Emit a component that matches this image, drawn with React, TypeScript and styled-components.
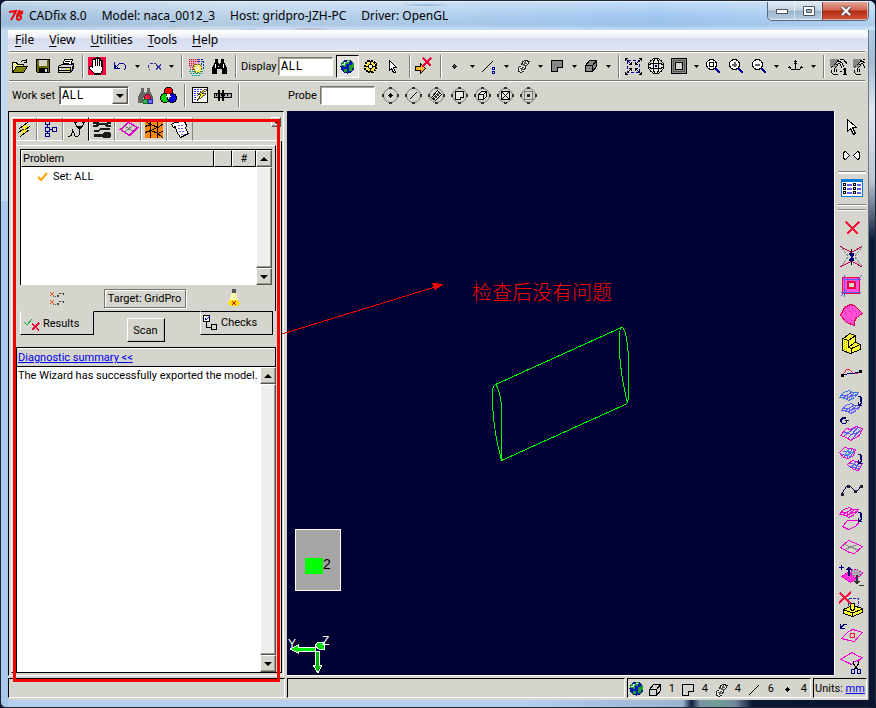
import React from "react";
import styled, { createGlobalStyle } from "styled-components";

const UI = `Roboto, "Noto Sans", sans-serif`;
const MENU = `"Noto Sans", "Open Sans", sans-serif`;
const FACE = "#d6d5cd";

const Global = createGlobalStyle`
  *, *::before, *::after { box-sizing: border-box; }
  body { margin: 0; background: #0a1230; font-family: ${UI}; font-size: 11px; color: #000; }
  button, input, select { font: inherit; color: inherit; margin: 0; padding: 0; border-radius: 0; }
`;

/* ---------- window frame ---------- */

const Frame = styled.div`
  min-height: 100vh;
  display: flex;
  flex-direction: column;
  padding: 0 6px 7px 7px;
  border: 1px solid #1c2733;
  border-radius: 7px 7px 6px 6px;
  background:
    linear-gradient(#a8c8ea 0 0) left 200px / 7px 100% no-repeat,
    linear-gradient(#c4d9f0 0 0) left top / 7px 200px no-repeat,
    linear-gradient(#bfdcf8 0, #a3bcd4 60px, #e0e6ee 110px, #b9c5d2 180px, #0b1838 240px, #0b1530 100%) right 0 / 6px 100% no-repeat,
    linear-gradient(90deg, #b4d0f1 0, #b4d0f1 60%, #9ab4d0 78%, #10203f 79%, #7c92a8 80%, #6f9f94 82%, #71879f 84%, #0b1733 86%, #0b1530 100%);
  overflow: hidden;
`;

const TitleBar = styled.header`
  height: 29px;
  margin: 0 -6px 0 -7px;
  padding: 0 6px 0 8px;
  display: flex;
  align-items: center;
  gap: 5px;
  border-top: 1px solid #e8f2fc;
  background:
    radial-gradient(ellipse at 175px 25px, #c98f9e88, transparent 18px),
    radial-gradient(ellipse at 248px 27px, #5570c088, transparent 16px),
    radial-gradient(ellipse at 310px 27px, #a8708c88, transparent 24px),
    radial-gradient(ellipse at 425px 3px, #34608c66, transparent 26px),
    linear-gradient(#ffffff55, transparent 45%, #5a88b822 80%, #ffffff55),
    linear-gradient(90deg, #a4c2df, #bed3e8 25%, #b4d1ef 50%, #a3c9f2 75%, #b9d6f2);
`;

const Title = styled.h1`
  flex: 1;
  display: flex;
  gap: 15px;
  margin: 0;
  font-family: ${MENU};
  font-size: 12px;
  font-weight: 400;
  line-height: 16px;
  white-space: nowrap;
`;

const WindowButtons = styled.div`
  align-self: flex-start;
  display: flex;
  border: 1px solid #55697f;
  border-top: 0;
  border-radius: 0 0 5px 5px;
  overflow: hidden;
`;

const WindowButton = styled.button<{ $close?: boolean }>`
  width: ${(p) => (p.$close ? 46 : 27)}px;
  height: 18px;
  display: grid;
  place-items: center;
  border: 0;
  border-left: ${(p) => (p.$close ? "1px solid #6a3a3a" : "0")};
  box-shadow: inset -1px -1px 0 #ffffff88;
  background: ${(p) =>
    p.$close
      ? "linear-gradient(#e5a698, #d0644f 45%, #b52a12 50%, #d2553a)"
      : "linear-gradient(#dfe9f4, #c3d3e4 45%, #9db4cc 50%, #b9cee2)"};
`;

const Client = styled.div`
  flex: 1;
  display: flex;
  flex-direction: column;
  min-width: 0;
  background: ${FACE};
  border-right: 1px solid #6c7884;
`;

const MenuBar = styled.nav`
  height: 21px;
  display: flex;
  align-items: center;
  gap: 15px;
  padding-left: 7px;
  font-family: ${MENU};
  font-size: 12px;
  line-height: 16px;
  background: linear-gradient(#fff, #eef0f8 35%, #d7ddef 45%, #dfe4f3);
  border-bottom: 1px solid #f4f4f4;
`;

const MenuItem = styled.button`
  border: 0;
  background: none;
  u { text-underline-offset: 2px; }
`;

/* ---------- toolbars ---------- */

const Toolbar = styled.div`
  height: 29px;
  margin: 0 3px 0 1px;
  display: flex;
  align-items: center;
  overflow: hidden;
  border-top: 1px solid #7d7d78;
  box-shadow: inset 0 1px 0 #fff;
  & > * { flex: none; }
`;

const Tool = styled.button<{ $active?: boolean; $wide?: boolean }>`
  width: ${(p) => (p.$wide ? 26 : 23)}px;
  height: 23px;
  display: grid;
  place-items: center;
  border: 1px solid;
  border-color: ${(p) => (p.$active ? "#000 #fff #fff #000" : "transparent")};
  background: ${(p) => (p.$active ? "#e6e5df" : "none")};
`;

const CaretButton = styled.button`
  width: 11px;
  height: 21px;
  display: grid;
  place-items: center;
  border: 0;
  background: none;
`;

const Separator = styled.span`
  width: 2px;
  height: 23px;
  margin: 0 2px 0 4px;
  background: linear-gradient(90deg, #7d7d78 50%, #fff 50%);
`;

const ToolLabel = styled.label<{ $width: number }>`
  width: ${(p) => p.$width}px;
  padding: 1px 0 0 2px;
  line-height: 16px;
  white-space: nowrap;
`;

const TextBox = styled.input`
  width: 55px;
  height: 19px;
  padding: 2px 2px 0;
  margin-right: 3px;
  font: 12px "Liberation Mono", monospace;
  border: 1px solid;
  border-color: #77756e #fff #fff #77756e;
  box-shadow: inset 1px 1px 0 #aaa89f;
  background: #fff;
`;

const Combo = styled.div`
  position: relative;
  width: 70px;
  margin-right: 5px;
  height: 19px;
  select {
    width: 100%;
    height: 100%;
    padding: 2px 2px 0;
    appearance: none;
    font: 12px "Liberation Mono", monospace;
    border: 1px solid;
    border-color: #77756e #fff #fff #77756e;
    box-shadow: inset 1px 1px 0 #555;
    background: #fff;
  }
`;

const raised = `
  border: 1px solid;
  border-color: #fff #55534e #55534e #fff;
  box-shadow: inset -1px -1px 0 #9b9990;
  background: ${FACE};
`;

const ComboArrow = styled.span`
  position: absolute;
  top: 2px;
  right: 1px;
  bottom: 1px;
  width: 16px;
  display: grid;
  place-items: center;
  pointer-events: none;
  ${raised}
`;

const Filler = styled.span<{ $w: number }>`
  width: ${(p) => p.$w}px;
`;

/* ---------- main area ---------- */

const Main = styled.main`
  position: relative;
  flex: 1;
  display: flex;
  min-height: 0;
  margin-top: 2px;
`;

const SidePanel = styled.section`
  position: relative;
  flex: none;
  width: 276px;
  display: flex;
  flex-direction: column;
  margin-bottom: 1px;
  padding: 5px 1px 2px 2px;
  border: 1px solid;
  border-color: #000 #fff #fff #000;
`;

const TabStrip = styled.div`
  display: flex;
  height: 24px;
  padding-right: 1px;
`;

const IconTab = styled.button<{ $active?: boolean }>`
  width: 26px;
  height: 24px;
  padding: 1px 0 0;
  display: grid;
  place-items: center;
  border: 0;
  border-top: 1px solid #fff;
  border-left: 1px solid #fff;
  border-right: 1px solid ${(p) => (p.$active ? "#000" : "#88867e")};
  border-bottom: 1px solid ${(p) => (p.$active ? FACE : "#fff")};
  background: none;
`;

const TabRest = styled.span`
  flex: 1;
  display: flex;
  justify-content: flex-end;
  align-items: flex-start;
  border-bottom: 1px solid #fff;
`;

const CollapseButton = styled.button`
  width: 10px;
  height: 10px;
  display: grid;
  place-items: center;
  ${raised}
`;

const TabPage = styled.div`
  flex: 1;
  display: flex;
  flex-direction: column;
  padding: 4px 5px 0 4px;
  border-left: 1px solid #fff;
  border-right: 1px solid #000;
  border-bottom: 1px solid #000;
`;

const ResultsPage = styled.div`
  display: flex;
  flex-direction: column;
  padding: 3px 3px 0 4px;
  border-top: 1px solid #fff;
  border-right: 1px solid #000;
`;

const ListFrame = styled.div`
  display: grid;
  grid-template-columns: minmax(0, 1fr) 16px;
  height: 136px;
  border-top: 1px solid #000;
  border-left: 1px solid #000;
  background: #fff;
`;

const ProblemTable = styled.table`
  width: 100%;
  align-self: start;
  table-layout: fixed;
  border-collapse: separate;
  border-spacing: 0;
  th {
    height: 17px;
    padding: 1px 1px 0;
    line-height: 14px;
    font-weight: 400;
    text-align: left;
    background: ${FACE};
    border: 1px solid;
    border-color: #fff #000 #000 #fff;
  }
  th:nth-child(2) { width: 18px; }
  th:nth-child(3) { width: 24px; text-align: center; }
  td { height: 18px; padding: 1px 0 0; line-height: 16px; }
`;

const SetCell = styled.span`
  display: flex;
  align-items: center;
  gap: 5px;
  padding-left: 16px;
`;

const ScrollBar = styled.div`
  display: flex;
  flex-direction: column;
  background: #e9e8e3;
`;

const ScrollButton = styled.button`
  height: 17px;
  flex: none;
  display: grid;
  place-items: center;
  ${raised}
`;

const Thumb = styled.div`
  flex: 1;
  ${raised}
  background: #eeeeec;
`;

const TargetRow = styled.div`
  display: flex;
  align-items: center;
  justify-content: space-between;
  height: 26px;
  padding: 0 32px 0 28px;
`;

const TargetButton = styled.button`
  height: 19px;
  width: 82px;
  margin-right: 4px;
  padding-top: 1px;
  line-height: 15px;
  border: 1px solid #77756e;
  box-shadow: inset 1px 1px 0 #fff, 1px 1px 0 #fff;
  background: ${FACE};
`;

const LowerTabs = styled.div`
  display: flex;
  justify-content: space-between;
  align-items: flex-start;
  height: 36px;
  padding: 0 3px 0 4px;
`;

const LowerTab = styled.button<{ $active?: boolean }>`
  display: flex;
  align-items: center;
  gap: 3px;
  width: ${(p) => (p.$active ? 74 : 73)}px;
  height: 24px;
  padding: ${(p) => (p.$active ? 4 : 2)}px 2px 2px;
  line-height: 16px;
  border: 1px solid;
  border-color: ${(p) => (p.$active ? FACE : "#000")} #000 #000 #fff;
  background: ${FACE};
`;

const ScanSlot = styled.span`
  flex: 1;
  display: flex;
  justify-content: center;
  padding: 6px 3px 0 0;
  border-top: 1px solid #000;
`;

const ScanButton = styled.button`
  width: 38px;
  height: 24px;
  border: 1px solid;
  border-color: #fff #000 #000 #fff;
  box-shadow: inset -1px -1px 0 #c0beb6;
  background: ${FACE};
`;

const Summary = styled.section`
  flex: 1;
  display: flex;
  flex-direction: column;
  border-left: 1px solid #000;
`;

const SummaryHead = styled.h2`
  margin: 0;
  height: 20px;
  padding: 2px 1px 0;
  font-size: 11px;
  font-weight: 400;
  line-height: 16px;
  border: 1px solid #000;
  border-left: 0;
  box-shadow: inset 0 1px 0 #fff;
  a { color: #0000f0; }
`;

const SummaryBody = styled.div`
  flex: 1;
  display: grid;
  grid-template-columns: minmax(0, 1fr) 16px;
  background: #fff;
  p { margin: 0; padding: 1px 0 0 1px; line-height: 16px; white-space: nowrap; }
`;

const Highlight = styled.div`
  position: absolute;
  z-index: 2;
  inset: 7px 3px -7px 4px;
  border: 3px solid #f80000;
  pointer-events: none;
`;

const Viewport = styled.section`
  position: relative;
  flex: 1;
  min-width: 0;
  margin: 0 0 1px 3px;
  background: #000033;
  border-right: 1px solid #fff;
  border-bottom: 1px solid #fff;
`;

const Scene = styled.svg`
  display: block;
  position: absolute;
  left: -8px;
  top: 0;
`;

const Note = styled.p`
  position: absolute;
  left: 185px;
  top: 168px;
  margin: 0;
  font: 300 20px/26px "Noto Sans CJK SC", sans-serif;
  color: #fa0000;
  white-space: nowrap;
`;

const Legend = styled.div`
  position: absolute;
  left: 8px;
  bottom: 84px;
  width: 46px;
  height: 62px;
  display: flex;
  align-items: center;
  padding: 8px 0 0 9px;
  border: 1px solid #fff;
  background: #a6a6a6;
  font: 14px "Liberation Sans", sans-serif;
`;

const Swatch = styled.span`
  width: 18px;
  height: 16px;
  margin-top: 3px;
  background: #00ff00;
`;

const Axes = styled.svg`
  position: absolute;
  left: 0;
  bottom: 0;
  font: 12px "Liberation Sans", sans-serif;
`;

const Rail = styled.aside`
  flex: none;
  width: 33px;
  display: flex;
  flex-direction: column;
  align-items: center;
  padding-top: 1px;
`;

const RailTool = styled.button`
  width: 29px;
  height: 29px;
  flex: none;
  display: grid;
  place-items: center;
  border: 0;
  background: none;
  &:last-child { height: 28px; }
`;

const RailRule = styled.hr<{ $double?: boolean }>`
  width: 28px;
  height: ${(p) => (p.$double ? 6 : 2)}px;
  margin: ${(p) => (p.$double ? "2px 0 3px" : "1px 0 0")};
  border: solid #85837b;
  border-width: 1px 0 ${(p) => (p.$double ? 1 : 0)}px;
  box-shadow: 0 1px 0 #fff, inset 0 1px 0 #fff;
`;

/* ---------- status bar ---------- */

const StatusBar = styled.footer`
  height: 23px;
  display: flex;
  gap: 2px;
  padding: 1px 1px 2px 0;
`;

const StatusCell = styled.div<{ $width?: number }>`
  ${(p) => (p.$width ? `flex: none; width: ${p.$width}px;` : "flex: 1;")}
  display: flex;
  align-items: center;
  line-height: 16px;
  border: 1px solid;
  border-color: #000 #fff #fff #000;
  padding: 2px 0 0 1px;
  a { color: #0000f0; }
`;

const Count = styled.span`
  width: 33px;
  display: flex;
  align-items: center;
  justify-content: space-between;
  padding-right: 3px;
`;

/* ---------- icons ---------- */

const Glyph = styled.svg`
  display: block;
  overflow: visible;
`;

type ArtProps = { size?: number; children: React.ReactNode; w?: number };
const Art = ({ size = 21, children, w }: ArtProps) => (
  <Glyph
    width={w ?? size}
    height={size}
    viewBox={`0 0 ${w ?? size} ${size}`}
    fill="none"
    stroke="#000"
    shapeRendering="crispEdges"
    aria-hidden="true"
  >
    {children}
  </Glyph>
);

const Tri = ({ up, big }: { up?: boolean; big?: boolean }) => (
  <Glyph width={big ? 8 : 5} height={big ? 4 : 3} viewBox="0 0 8 4" preserveAspectRatio="none" aria-hidden="true">
    <path d={up ? "M0 4L4 0L8 4z" : "M0 0L8 0L4 4z"} fill="#000" />
  </Glyph>
);

const Globe = () => (
  <>
    <circle cx="10.5" cy="10.5" r="6.5" fill="#0019b8" stroke="#001b70" />
    <path d="M5 6h5v-2h3v2h-1v2h-3v3h-2v-1h-3zM12 9h3v-2h2v5h-2v3h-3v-3zM7 13h3v3h-3z" fill="#1e9e28" stroke="none" />
    <path d="M5 8h2v-2h2M10 5h2" stroke="#d9f4ff" />
  </>
);

const Binoculars = ({ fill = "#000" }: { fill?: string }) => (
  <path
    d="M6 3h3v3l1 2h1l1-2v-3h3v3l3 6v6h-5v-5h-5v5h-5v-6l3-6z"
    fill={fill}
    stroke="none"
  />
);

const Hatch = () => (
  <>
    <path
      d="M5.500 15.500V11.500L8.500 9.500L9.500 5.500L12.500 4.500L16.500 5.500L14.500 8.500L12.500 10.500L11.500 14.500L8.500 16.500z"
      fill="#e8e7e1"
      stroke="#222"
    />
    <path d="M8.500 15L10.500 10.500L12.500 5.500M7.500 12.500L10.500 14M9.500 8.500L12.500 10M11 6.500L14 8" stroke="#555" />
  </>
);

const Shape = ({ fill = "none" }: { fill?: string }) => (
  <path d="M4.500 4.500H15.500V11.500H10.500V15.500H4.500z" fill={fill} />
);

const Cube = ({ fill = "none" }: { fill?: string }) => (
  <>
    <path d="M4.500 9.500L8.500 4.500H15.500V10.500L11.500 15.500H4.500z" fill={fill} />
    <path d="M4.500 9.500H11.500V15.500M11.500 9.500L15.500 4.500" />
  </>
);

const Lens = ({ children }: { children: React.ReactNode }) => (
  <>
    <circle cx="8.500" cy="8.500" r="5" fill="#fff" />
    <path d="M12.500 12.500L17 17" stroke="#000090" strokeWidth="2.500" />
    {children}
  </>
);

const GrabHand = ({ one }: { one?: boolean }) => (
  <>
    <path d="M2 3h9v3h-3v5H2z" fill="#888" stroke="none" />
    <path d="M2.500 12.500L4.500 10.500M3.500 13.500V16.500L5.500 18.500H9.500M6.500 15.500V12.500L9.500 9.500M8.500 16V12.500M5.500 9.500L10.500 4.500M9.500 4.500L13.500 6.500L16.500 11.500M8.500 8.500L11.500 7.500L14.500 12.500M11.500 3.500H15.500L19.500 8.500" />
    {one && <path d="M12 15.500h2M16.500 12v6M15 13.500h2M17.500 12v6M15 18.500h4" />}
  </>
);

const ProbeRing = ({ children }: { children: React.ReactNode }) => (
  <>
    <circle cx="10.500" cy="10.500" r="7" stroke="#777" shapeRendering="auto" />
    <path d="M10.500 2v2M10.500 17v2M2 10.500h2M17 10.500h2" stroke="#333" strokeWidth="3" />
    {children}
  </>
);

const icons = {
  open: (
    <>
      <path d="M2.500 16.500V6.500H6.500L7.500 8.500H13.500V10.500" fill="#fffb9e" />
      <path d="M2.500 16.500L6.500 10.500H17.500L13.500 16.500z" fill="#808000" />
      <path d="M11 5.500Q13.500 3 16.500 5.500M16.500 3V6.500H14" />
    </>
  ),
  save: (
    <>
      <path d="M3.500 3.500H16.500V16.500H4.500L3.500 15.500z" fill="#6b6b00" />
      <path d="M6 4h8v6H6z" fill="#d6d5cd" stroke="none" />
      <path d="M6 12h9v5H6z" fill="#000" stroke="none" />
      <path d="M12 13h2v3h-2z" fill="#ddd" stroke="none" />
    </>
  ),
  print: (
    <>
      <path d="M6.500 9.500L8.500 3.500H16.500L14.500 9.500z" fill="#fff" />
      <path d="M2.500 10.500L5.500 8.500H15.500L17.500 7.500V12.500L14.500 16.500H2.500z" fill="#d6d5cd" />
      <path d="M9 5.500h5M8 7.500h5M2 11.500h12M2 14.500h12M14.500 11v6M16.500 10v4" />
      <path d="M10 13h3v1h-3z" fill="#e8d800" stroke="none" />
    </>
  ),
  hand: (
    <>
      <path d="M1 1h18v18H1z" fill="#ff0040" stroke="none" />
      <path d="M7.500 17.500L2.500 12.500V10.500H4.500L5.500 11.500V3.500H7.500V2.500H9.500V1.500H11.500V2.500H13.500V4.500H15.500V14.500L13.500 17.500z" fill="#fff" />
      <path d="M7 18.500h7M8.500 3v7M10.500 2v8M12.500 3v7M14.500 5v6" />
    </>
  ),
  undo: <path d="M4.500 6V12.500H10M5 12L9.500 7.500H13.500L15.500 9.500V12.500L13.500 14.500M5.500 9V12M6.500 11H8" stroke="#000090" />,
  redo: (
    <>
      <path d="M8.500 7.500H6.500L4.500 9.500V12.500L6.500 14.500M10 7.500h2" stroke="#30309a" strokeDasharray="3 1" />
      <path d="M12 8.500l5 5M17 8.500l-5 5" stroke="#3030a0" />
    </>
  ),
  region: (
    <>
      <path d="M3 3h11v8H3z" fill="#d9a9b8" stroke="none" />
      <path d="M3 3.500h11M3 5.500h11M3 7.500h6M3 9.500h5M4 11.500h3M4 13.500h3" stroke="#c80a3c" strokeDasharray="1 1" />
      <path d="M12 5.500h6M17.500 5v9M15.500 7v5M12 3.500h6" stroke="#0038c8" strokeDasharray="2 1" />
      <path d="M3 15.500h10M4 17.500h13M15 15.500h3M6 19.500h8" stroke="#00b0a8" strokeDasharray="2 1" />
      <path d="M8.500 8.500h5l2 2v4l-3 2h-3l-2-4z" fill="#f5ef69" stroke="#776a00" strokeDasharray="2 1" />
      <path d="M10 11h3v3h-3z" fill="#fff" stroke="none" />
    </>
  ),
  binoculars: (
    <>
      <Binoculars />
      <path d="M6.500 8v4M14.500 8v4M9.500 10v1" stroke="#fff" />
    </>
  ),
  globe: <Globe />,
  gear: (
    <>
      <path d="M8 5h5l3 3v5l-3 3H8l-3-3V8z" fill="#ffec45" strokeWidth="2" strokeDasharray="2 1" />
      <path d="M10.500 5v4M5 10.500h3M13 10.500h3M10.500 12v4" />
      <circle cx="10.500" cy="10.500" r="2" fill="#fff" />
    </>
  ),
  pointer: <path d="M6.500 4.500V14.500L8.500 12.500L10.500 16.500H12.500L10.500 11.500H13.500z" fill="#fff" />,
  arrowX: (
    <>
      <path d="M1.500 10.500H6.500V7.500L11.500 12.500L6.500 17.500V14.500H1.500z" fill="#ffb52e" />
      <path d="M9 2L17 10M17 2L8 11" stroke="#f00038" strokeWidth="2" />
    </>
  ),
  point: <path d="M9.500 8.500L11.500 10.500L9.500 12.500L7.500 10.500z" fill="#444" />,
  line: (
    <>
      <path d="M3 16L14 5" />
      <path d="M13.500 11.500h2v2h-2zM13.500 15.500h2v2h-2z" stroke="#0000a0" fill="#fff" />
    </>
  ),
  hatch: <Hatch />,
  shape: <Shape fill="#888" />,
  cube: <Cube fill="#888" />,
  fit: (
    <>
      <rect x="4.500" y="4.500" width="12" height="12" stroke="#0000a0" strokeDasharray="3 2" />
      <path d="M3 3l5 5M18 3l-5 5M3 18l5-5M18 18l-5-5" />
      <path d="M6 8.500h2.500V6M12.500 6v2.500H15M6 12.500h2.500V15M15 12.500h-2.500V15M2.500 5V2.500H5M16 2.500h2.500V5M2.500 16v2.500H5M16 18.500h2.500V16" />
    </>
  ),
  sphere: (
    <>
      <circle cx="10" cy="10" r="7.500" fill="#e8e7e1" />
      <ellipse cx="10" cy="10" rx="3" ry="7.500" />
      <ellipse cx="10" cy="10" rx="7.500" ry="3" />
      <path d="M9 9h2v2H9z" fill="#0000a0" stroke="none" />
    </>
  ),
  box: (
    <>
      <path d="M2.500 2.500h15v15h-15z" fill="#8c8c8c" />
      <path d="M6.500 6.500h7v7h-7z" fill="#d6d5cd" />
      <path d="M4 4.500h12M4.500 4v12M15.500 4v12M4 15.500h12" stroke="#555" />
    </>
  ),
  zoomFit: <Lens><path d="M6.500 6.500h4v4h-4z" /></Lens>,
  zoomIn: <Lens><path d="M6 8.500h5M8.500 6v5" stroke="#666" strokeWidth="2" /></Lens>,
  zoomOut: <Lens><path d="M6 8.500h5" stroke="#666" strokeWidth="2" /></Lens>,
  anchor: (
    <>
      <path d="M10.500 4V14M9 7.500h3M4 10.500L6.500 13.500H14.500L17 10.500M3 11.500h3M15 11.500h3M9 13.500h3" />
      <path d="M9 5h3v1H9z" fill="#000" stroke="none" />
    </>
  ),
  hand1: <GrabHand one />,
  hand2: <GrabHand />,
  findColor: (
    <>
      <Binoculars fill="#666" />
      <circle cx="12.500" cy="12.500" r="3" fill="#f02040" stroke="#800020" />
      <circle cx="10.500" cy="16.500" r="2.500" fill="#30c050" stroke="#107020" />
      <circle cx="15.500" cy="16.500" r="2.500" fill="#7070ff" stroke="#2020a0" />
    </>
  ),
  rgb: (
    <>
      <circle cx="10.500" cy="7" r="4.500" fill="#f00" />
      <circle cx="7" cy="13" r="4.500" fill="#00d000" />
      <circle cx="14" cy="13" r="4.500" fill="#0000e8" />
      <path d="M7.500 9.500h6l-3 6z" fill="#3a3a3a" stroke="none" />
      <path d="M9 9h3v2h1v1h-5v-1h1zM10 12h1v2h-1z" fill="#fff" stroke="none" />
    </>
  ),
  wizard: (
    <>
      <path d="M3.500 2.500h15v15h-15z" fill="#fff" />
      <path d="M5 4.500h8M5 6.500h7M5 8.500h6M5 10.500h4M5 12.500h3M5 14.500h3" stroke="#4040ff" strokeDasharray="2 1" />
      <path d="M14.500 4.500L8.500 9.500H11.500L7.500 15.500L16.500 8.500H12.500L17.500 4.500z" fill="#ffed1a" strokeWidth=".7" />
    </>
  ),
  ruler: (
    <>
      <path d="M2 8.500h17v4H2zM4.500 9v2M9.500 9v2M12.500 9v2M15.500 9v2" fill="#aaa" />
      <path d="M7 5v11M11 5v11" strokeWidth="2" />
    </>
  ),
  pPoint: <ProbeRing><path d="M10.500 8.500l2 2l-2 2l-2-2z" fill="#000" /></ProbeRing>,
  pLine: <ProbeRing><path d="M7 14l7-7" /></ProbeRing>,
  pHatch: (
    <ProbeRing>
      <path d="M5.500 12.500L11.500 5.500L15.500 9.500L9.500 15.500z" fill="#e8e7e1" />
      <path d="M7 13l6-6M8 14l6-6M7.500 10.500l4 3M9.500 8.500l4 3" stroke="#333" />
    </ProbeRing>
  ),
  pShape: <ProbeRing><path d="M6.500 6.500h8v6h-3v2h-5z" fill="#e8e7e1" /></ProbeRing>,
  pCube: <ProbeRing><path d="M6.500 9.500h5v5h-5zM6.500 9.500l3-3h5l-3 3M14.500 6.500v5l-3 3" fill="#e8e7e1" /></ProbeRing>,
  pCross: <ProbeRing><path d="M6.500 6.500h8v8h-8zM7 7l7 7M14 7l-7 7" fill="#e8e7e1" /></ProbeRing>,
  pBox: <ProbeRing><path d="M6.500 6.500h8v8h-8z" stroke="#777" /><path d="M9 9h3v3H9z" fill="#222" stroke="none" /></ProbeRing>,
};

type IconName = keyof typeof icons;

const tabIcons: Record<string, React.ReactNode> = {
  Wizard: (
    <>
      <path d="M14 3L6 9h4l-6 4h4l-2 4l9-6h-4l5-4h-4z" fill="#ffec1a" stroke="none" />
      <path d="M14 3L5.500 9.500M9.500 10L4.500 13.500M6 17.500L15 11M11.500 10.500L16 7" />
    </>
  ),
  Tree: <path d="M5.500 2.500h4v3h-4zM5.500 8.500h4v4h-4zM5.500 14.500h4v3h-4zM12.500 8.500h4v4h-4zM7.500 6v2M7.500 13v1M10 10.500h2" stroke="#00008c" />,
  Diagnostics: (
    <>
      <path d="M9.500 3.500Q9.500 8.500 13.500 8.500Q17.500 8.500 17.500 3.500M13.500 9V14Q13.500 17.500 10.500 17.500Q8.500 17.500 8.500 15L6.500 11.500L5.500 16.500L2.500 17.500" />
      <path d="M8 2h3v2H8zM16 2h3v2h-3zM12 7h3v3h-3z" fill="#000" stroke="none" />
    </>
  ),
  Tools: <path d="M1 3h5l1 1h7l2-1h3v2h-3v1h3v2h-5l-1-2H7L5 8H1V6h3V5H1zM8 9h10v2H8L6 13H2v-2h4zM2 15h8l2-2h5l2 2v3l-2 1h-5l-2-1H2z" fill="#1b1b1b" stroke="none" />,
  Mesh: (
    <>
      <path d="M2.500 10.500L10.500 3.500L19.500 8.500L11.500 16.500z" stroke="#e000c8" strokeWidth="1.500" />
      <path d="M6.500 7L15.500 12.500M6.500 13.500L15 6" stroke="#777" />
    </>
  ),
  Triangles: (
    <>
      <path d="M1 1h18v18H1z" fill="#ff8400" stroke="none" />
      <path d="M1 7.500L7 5.500L14 8.500L19 5M6.500 1V19M13.500 1V19M1 13.500L7 11.500L14 14.500L19 12M6.500 12L13.500 8M1 1L6.500 6M13.500 14L19 19" />
    </>
  ),
  Log: (
    <>
      <path d="M3.500 8.500L1.500 5.500L4.500 3.500L14.500 2.500L16.500 6.500L15.500 9.500L18.500 14.500L10.500 18.500L6.500 12.500L5.500 7.500z" fill="#fff" />
      <path d="M8 6.500h5M8 9.500h5M9 12.500h5M11 15.500h4" stroke="#6060ff" strokeDasharray="2 1" />
    </>
  ),
};

const MAG = "#f000d0";
const BLUE = "#5c5cf8";

const Sheet = ({ x = 0, y, color = MAG, inner }: { x?: number; y: number; color?: string; inner?: string }) => (
  <g transform={`translate(${x} ${y})`}>
    <path d="M1.500 8.500L5.500 3.500L11.500 1.500L14.500 3.500L20.500 3.500L16.500 8.500L10.500 11.500L7.500 9.500z" stroke={color} />
    {inner && <path d="M4 6.500H8L11 8.500L18 5.500M5 9L14 3M8 10L17 3.500" stroke={inner} />}
  </g>
);

const Hook = () => (
  <g transform="translate(19 8)">
    <path d="M1 .5h2L4.500 2V7L2 9.500M1 6V9.500H5" stroke="#00006c" />
    <path d="M3.500 1V6" stroke="#00006c" />
  </g>
);

const railIcons: { name: string; art: React.ReactNode }[] = [
  {
    name: "Delete",
    art: <path d="M8 8L20 20M21 8L9 20" stroke="#ff1038" strokeWidth="2" />,
  },
  {
    name: "Collapse nodes",
    art: (
      <>
        <path d="M2.500 3.500L13.500 9.500L24 3.500M2.500 24L13.500 18L24 24" stroke="#c00050" />
        <path d="M3.500 4.500L10.500 13.500L3.500 23M23.500 4.500L16.500 13.500L23.500 23" stroke="#888" strokeDasharray="3 1" />
        <path d="M13.500 6V22" />
        <path d="M11 10h5v2l-2 2h-1l-2-2zM11 18h5v-2l-2-2h-1l-2 2z" fill="#000080" stroke="none" />
      </>
    ),
  },
  {
    name: "Trim face",
    art: (
      <>
        <path d="M4.500 5.500h17v16h-17z" fill="#ff50e0" stroke="#f00040" />
        <path d="M10 10h7v6h-7z" fill="#d6d5cd" stroke="#f00040" strokeWidth="1.500" />
        <path d="M6.500 3V25M3 20.500h20M3 24L9 18M17 10L24 3M5 7.500h18" stroke={BLUE} />
      </>
    ),
  },
  {
    name: "Surface",
    art: (
      <>
        <path d="M2.500 14.500L6.500 6.500L12.500 3.500L16.500 4.500L24.500 12.500L18.500 16.500L16.500 20.500V24.500L8.500 21.500z" fill="#ff50d8" stroke="#e00050" />
        <path d="M6 10l8 10M9 7l9 10M13 6l7 8" stroke="#f030a0" strokeDasharray="1 1" />
      </>
    ),
  },
  {
    name: "Solid",
    art: (
      <>
        <path d="M4.500 9.500V20.500L12.500 23.500L22.500 19.500V14.500L17.500 12.500V5.500L11.500 3.500z" fill="#ffff30" />
        <path d="M4.500 8.500L10.500 10.500V17.500L13.500 18.500V23M10.500 10.500L17 6M10.500 17L17 12.500M13.500 18.500L22 14.500" />
        <path d="M6 11v9M8 12v9" stroke="#aaa800" strokeDasharray="1 1" />
      </>
    ),
  },
  {
    name: "Edge fit",
    art: (
      <>
        <path d="M4.500 16.500L8.500 10.500H11.500L15.500 14.500H19.500L22.500 11.500" stroke="#f02040" />
        <path d="M4.500 16.500L11 14.500L22.500 13.500" stroke="#000080" />
        <path d="M3 15h3v3H3zM21 11h3v3h-3z" fill="#000" stroke="none" />
      </>
    ),
  },
  { name: "Copy mesh", art: <><Sheet y={1} color="#3878e0" inner={BLUE} /><Sheet x={2} y={14} color={BLUE} inner={BLUE} /><Hook /></> },
  {
    name: "Global mesh",
    art: (
      <>
        <path d="M8 .5H4.500L2.500 2.500V4.500L4.500 6.500H8M8.500 3V6M6.500 3.500H11M8 1.500H5L3.500 3V5" stroke="#000060" />
        <path d="M2.500 18.500L8.500 11.500L12.500 12.500L18.500 9.500L24.500 11.500L21.500 18.500L12.500 23.500L8.500 20.500z" stroke={MAG} />
        <path d="M5 15.500H9L13 17.500L23 14.500M6 19L16.500 11M10 21L20.500 10M14 22L23 12" stroke={BLUE} />
      </>
    ),
  },
  {
    name: "Refine mesh",
    art: (
      <>
        <path d="M1.500 6.500L6.500 1.500L17.500 3.500L15.500 9.500L10.500 12.500L5.500 11.500z" stroke={MAG} />
        <path d="M3 8.500l11 2M5 5l11 2M6 11l5-9M9 12l5-9M12 12l4-8" stroke={BLUE} />
        <path d="M7.500 7.500L10.500 4.500L13.500 6.500L10.500 9.500z" stroke="#28b0e0" />
        <path d="M9.500 18.500L14.500 14.500L24.500 17.500L20.500 24.500L15.500 23.500z" stroke={MAG} />
        <path d="M12 17l11 4M11 20l10 3M13 22l5-6M17 23l4-6" stroke={BLUE} />
        <Hook />
      </>
    ),
  },
  {
    name: "Spline",
    art: (
      <>
        <path d="M4.500 19.500V17.500L8.500 11.500H12.500L15.500 14.500L18.500 16.500L23 11.500" stroke="#000060" />
        <path d="M3 18h3v3H3zM9 10h3v3H9zM16 15h3v3h-3zM22 10h3v3h-3z" fill="#223" stroke="none" />
      </>
    ),
  },
  { name: "Copy face", art: <><Sheet y={2} inner={MAG} /><path d="M4.500 22.500L9.500 16.500L22.500 16.500L17.500 22.500L10.500 25.500z" stroke={MAG} /><Hook /></> },
  {
    name: "Split face",
    art: (
      <>
        <path d="M2.500 14.500L10.500 7.500L15.500 9.500L24.500 13.500L16.500 20.500L11.500 19.500z" stroke={MAG} />
        <path d="M6.500 11.500L20 17M7 16.500L19 11.500M11 14h5" stroke="#888" />
      </>
    ),
  },
  {
    name: "Orient",
    art: (
      <>
        <path d="M3.500 14.500L9.500 10.500L17.500 11.500L17.500 17.500L12.500 20.500z" fill="#ff30d8" stroke={MAG} />
        <path d="M13 8l5-1l7 4l-6 5l-5-3z" fill="#aaa" stroke={MAG} strokeDasharray="2 1" />
        <path d="M1 5.500h5M3.500 3v5" stroke="#00008c" />
        <path d="M10 6h2v8h-2zM11 4l3 4H8z" fill="#00006c" stroke="none" />
        <path d="M18 13h2v6h-2zM19 23l3-4h-6z" fill="#333" stroke="none" />
        <path d="M21 23.500h5" stroke="#333" />
      </>
    ),
  },
  {
    name: "Remove feature",
    art: (
      <>
        <path d="M5.500 18.500L14.500 14.500L24.500 17.500V21.500L14.500 25.500L5.500 22.500z" fill="#ffff30" />
        <path d="M6 19l9 3l9-4M14.500 22v4M12.500 18.500v-6h4v6l-2 1z" fill="#ffff30" />
        <path d="M10.500 15V7.500H20.500V15" stroke="#2040b0" strokeDasharray="3 1" />
        <path d="M2 2L13 13M13 1L1 12" stroke="#f81040" strokeWidth="2" />
      </>
    ),
  },
  {
    name: "Remove hole",
    art: (
      <>
        <path d="M3.500 18.500L9.500 12.500L14.500 9.500L18.500 10.500L24.500 12.500L20.500 16.500L16.500 21.500L11.500 20.500z" stroke={MAG} />
        <circle cx="14.500" cy="15.500" r="2.500" stroke="#f01030" />
        <path d="M2.500 4V8.500H7M3 7.500L6 4.500H9" stroke="#00007c" strokeWidth="1.500" />
      </>
    ),
  },
  {
    name: "Cut face",
    art: (
      <>
        <path d="M2.500 10.500L10.500 5.500L14.500 3.500L18.500 6.500L24.500 8.500L19.500 12.500M2.500 10.500L7.500 12.500L13.500 15.500L16.500 12.500L23.500 9.500" stroke={MAG} />
        <path d="M15.500 12V15L19.500 20M20.500 12V15L16.500 20" />
        <path d="M13.500 20.500h3v4h-3zM19.500 20.500h3v4h-3z" stroke="#00008c" />
      </>
    ),
  },
];

/* ---------- pieces ---------- */

const ToolIcon = ({ name, active, wide }: { name: IconName; active?: boolean; wide?: boolean }) => (
  <Tool type="button" aria-label={name} aria-pressed={active} $active={active} $wide={wide}>
    <Art>{icons[name]}</Art>
  </Tool>
);

const DropTool = ({ name, wide }: { name: IconName; wide?: boolean }) => (
  <>
    <ToolIcon name={name} wide={wide} />
    <CaretButton type="button" aria-label={`${name} options`}><Tri /></CaretButton>
  </>
);

const Scroller = () => (
  <ScrollBar>
    <ScrollButton type="button" aria-label="Scroll up"><Tri up big /></ScrollButton>
    <Thumb />
    <ScrollButton type="button" aria-label="Scroll down"><Tri big /></ScrollButton>
  </ScrollBar>
);

const titleParts = ["CADfix 8.0", "Model: naca_0012_3", "Host: gridpro-JZH-PC", "Driver: OpenGL"];
const menus = ["File", "View", "Utilities", "Tools", "Help"];
const probes: IconName[] = ["pPoint", "pLine", "pHatch", "pShape", "pCube", "pCross", "pBox"];

const counts: { art: React.ReactNode; label: string; value: number }[] = [
  { art: <Cube />, label: "Bodies", value: 1 },
  { art: <Shape />, label: "Faces", value: 4 },
  { art: <Hatch />, label: "Surfaces", value: 4 },
  { art: <path d="M5 15L15 5" />, label: "Lines", value: 6 },
  { art: <path d="M10.500 7.500l2 2l-2 2l-2-2z" fill="#000" />, label: "Points", value: 4 },
];

export default function App() {
  return (
    <Frame>
      <Global />
      <TitleBar>
        <Glyph width="15" height="14" viewBox="0 0 15 14" fill="none" stroke="#f00000" strokeWidth="2" aria-hidden="true">
          <path d="M0 3L7 2L5 6L2 11M11 1Q7 7 8 10Q10 12 12 9Q13 6 9 7M9 5L14 2M11 5L14 4" />
        </Glyph>
        <Title>{titleParts.map((t) => <span key={t}>{t}</span>)}</Title>
        <WindowButtons>
          <WindowButton type="button" aria-label="Minimize">
            <Glyph width="12" height="5"><rect x=".5" y=".5" width="11" height="4" fill="#fff" stroke="#4d5560" /></Glyph>
          </WindowButton>
          <WindowButton type="button" aria-label="Restore">
            <Glyph width="12" height="10" fill="#fff" stroke="#4d5560"><path d="M.5 .5h11v9H.5z" /><path d="M3.500 3.500h5v3h-5z" fill="#9db4cc" /></Glyph>
          </WindowButton>
          <WindowButton type="button" aria-label="Close" $close>
            <Glyph width="12" height="10" fill="none">
              <path d="M2 1L10 9M10 1L2 9" stroke="#5d4a50" strokeWidth="4" />
              <path d="M2 1L10 9M10 1L2 9" stroke="#fff" strokeWidth="2" />
            </Glyph>
          </WindowButton>
        </WindowButtons>
      </TitleBar>

      <Client>
        <MenuBar>
          {menus.map((m) => (
            <MenuItem type="button" key={m}><u>{m[0]}</u>{m.slice(1)}</MenuItem>
          ))}
        </MenuBar>

        <Toolbar role="toolbar" aria-label="Main">
          <ToolIcon name="open" />
          <ToolIcon name="save" />
          <ToolIcon name="print" />
          <Separator />
          <ToolIcon name="hand" />
          <DropTool name="undo" />
          <DropTool name="redo" />
          <Separator />
          <ToolIcon name="region" />
          <ToolIcon name="binoculars" />
          <Separator />
          <ToolLabel htmlFor="display" $width={39}>Display</ToolLabel>
          <TextBox id="display" defaultValue="ALL" />
          <ToolIcon name="globe" active />
          <ToolIcon name="gear" />
          <ToolIcon name="pointer" />
          <Separator />
          <ToolIcon name="arrowX" />
          <Separator />
          <DropTool name="point" />
          <DropTool name="line" />
          <DropTool name="hatch" />
          <DropTool name="shape" />
          <DropTool name="cube" />
          <Separator />
          <ToolIcon name="fit" />
          <ToolIcon name="sphere" />
          <DropTool name="box" />
          <ToolIcon name="zoomFit" />
          <ToolIcon name="zoomIn" />
          <DropTool name="zoomOut" />
          <DropTool name="anchor" wide />
          <Separator />
          <ToolIcon name="hand1" />
          <ToolIcon name="hand2" />
        </Toolbar>

        <Toolbar role="toolbar" aria-label="Sets">
          <Filler $w={1} />
          <ToolLabel htmlFor="workset" $width={49}>Work set</ToolLabel>
          <Combo>
            <select id="workset" defaultValue="ALL"><option>ALL</option></select>
            <ComboArrow><Tri big /></ComboArrow>
          </Combo>
          <ToolIcon name="findColor" />
          <ToolIcon name="rgb" />
          <Separator />
          <ToolIcon name="wizard" />
          <ToolIcon name="ruler" />
          <Separator />
          <Filler $w={44} />
          <ToolLabel htmlFor="probe" $width={34}>Probe</ToolLabel>
          <TextBox id="probe" />
          <Filler $w={1} />
          {probes.map((p) => <ToolIcon key={p} name={p} />)}
        </Toolbar>

        <Main>
          <SidePanel>
            <TabStrip>
              {Object.entries(tabIcons).map(([label, art]) => (
                <IconTab type="button" key={label} aria-label={label} $active={label === "Diagnostics"}>
                  <Art>{art}</Art>
                </IconTab>
              ))}
              <TabRest>
                <CollapseButton type="button" aria-label="Collapse panel"><Tri /></CollapseButton>
              </TabRest>
            </TabStrip>
            <TabPage>
              <ResultsPage>
                <ListFrame>
                  <ProblemTable>
                    <thead><tr><th>Problem</th><th aria-label="State" /><th>#</th></tr></thead>
                    <tbody>
                      <tr>
                        <td colSpan={3}>
                          <SetCell>
                            <Glyph width="11" height="10" fill="none" stroke="#ffa200" strokeWidth="2"><path d="M1 5L4 8L10 1" /></Glyph>
                            Set: ALL
                          </SetCell>
                        </td>
                      </tr>
                    </tbody>
                  </ProblemTable>
                  <Scroller />
                </ListFrame>
                <TargetRow>
                  <Art size={17}>
                    <path d="M2 2l4 4M6 2l-4 4M2 10l4 4M6 10l-4 4" stroke="#d86020" />
                    <path d="M5 6.500h6M5 14.500h6" stroke="#555" strokeDasharray="1 1" />
                    <path d="M11.500 6.500l-2-1l2-2h4v2M11.500 14.500l-2-1l2-2h4v2" stroke="#444" strokeDasharray="3 1" />
                  </Art>
                  <TargetButton type="button">Target: GridPro</TargetButton>
                  <Art size={18} w={12}>
                    <path d="M4 0h4v4H4z" fill="#555" stroke="none" />
                    <path d="M4 4h4l3 9H1z" fill="#fffcae" stroke="none" />
                    <ellipse cx="6" cy="14" rx="6" ry="3.500" fill="#ffe000" stroke="none" />
                    <path d="M4 12l4 4M8 12l-4 4" stroke="#e00000" />
                  </Art>
                </TargetRow>
              </ResultsPage>
              <LowerTabs>
                <LowerTab type="button" $active>
                  <Art size={16} w={17}>
                    <path d="M1 6l3 3l5-6" stroke="#20a840" />
                    <path d="M9 8l7 6M16 7l-7 7" stroke="#f00030" strokeWidth="1.500" />
                  </Art>
                  Results
                </LowerTab>
                <ScanSlot><ScanButton type="button">Scan</ScanButton></ScanSlot>
                <LowerTab type="button">
                  <Art size={16} w={15}>
                    <path d="M.5 .5h6v6h-6z" fill="#fff" />
                    <path d="M2 3l1 2l4-4" stroke="#0000c0" />
                    <path d="M3.500 7v5.500h4M8.500 9.500h5v5h-5z" />
                  </Art>
                  Checks
                </LowerTab>
              </LowerTabs>
              <Summary>
                <SummaryHead><a href="#summary">Diagnostic summary &lt;&lt;</a></SummaryHead>
                <SummaryBody>
                  <p>The Wizard has successfully exported the model.</p>
                  <Scroller />
                </SummaryBody>
              </Summary>
            </TabPage>
            <Highlight />
          </SidePanel>

          <Viewport>
            <Scene width="360" height="360" viewBox="0 0 360 360" fill="none" shapeRendering="crispEdges" aria-label="Wing model">
              <path d="M3 223L156 176" stroke="#f00000" />
              <path d="M165 173L153 172L156 179z" fill="#ff0000" />
              <path
                d="M216.500 273.500L342.500 216.500M222.500 349.500L348.500 292.500M216.500 273.500Q212.500 274 213.500 292Q214.500 320 222.500 349.500M216.500 273.500Q220 276 222.500 294V349.500M342.500 216.500Q339.500 217 340.500 242Q342 266 348.500 292.500M342.500 216.500Q347.500 216 349.500 246V286L348.500 292.500"
                stroke="#00ff00"
              />
            </Scene>
            <Note>检查后没有问题</Note>
            <Legend><Swatch />2</Legend>
            <Axes width="48" height="44" viewBox="0 0 48 44" shapeRendering="crispEdges" aria-label="Axes">
              <path d="M3 18L11 14V16H28V20H11V22z" fill="#00e800" stroke="#fff" />
              <path d="M28 20H32V34H35L31 42L26 34H28z" fill="#00b400" stroke="#fff" />
              <path d="M28 15L31 11H37V18H32z" fill="#00d800" stroke="#fff" />
              <text x="1" y="17" fill="#fff">Y</text>
              <text x="35" y="14" fill="#fff">Z</text>
            </Axes>
          </Viewport>

          <Rail>
            <RailTool type="button" aria-label="Select">
              <Art size={27}><path d="M9.500 6.500V18.500L12.500 15.500L15.500 21.500L17.500 20.500L14.500 14.500H18.500z" fill="#fff" /></Art>
            </RailTool>
            <RailTool type="button" aria-label="Mirror">
              <Art size={27}><path d="M5.500 10.500L7.500 9.500L11.500 13.500L7.500 17.500L5.500 16.500zM21.500 10.500L19.500 9.500L15.500 13.500L19.500 17.500L21.500 16.500z" fill="#fff" /></Art>
            </RailTool>
            <RailRule />
            <RailTool type="button" aria-label="Entity list">
              <Art size={27}>
                <path d="M3.500 5.500h21v17h-21z" fill="#fff" stroke="#0878d8" />
                <path d="M3 6.500h22" stroke="#0878d8" strokeWidth="3" />
                <path d="M5.500 9.500h2v2h-2zM5.500 13.500h2v2h-2zM5.500 17.500h2v2h-2zM15.500 9.500h2v2h-2zM15.500 13.500h2v2h-2zM15.500 17.500h2v2h-2z" />
                <path d="M9 11h5M9 15h5M9 19h5M19 11h4M19 15h4M19 19h4" stroke={BLUE} strokeWidth="2" />
              </Art>
            </RailTool>
            <RailRule $double />
            {railIcons.map((r) => (
              <RailTool type="button" key={r.name} aria-label={r.name}><Art size={27}>{r.art}</Art></RailTool>
            ))}
          </Rail>
        </Main>

        <StatusBar>
          <StatusCell $width={277} />
          <StatusCell />
          <StatusCell $width={184}>
            <Art size={15} w={16}><g transform="translate(-3 -4)"><Globe /></g></Art>
            {counts.map((c) => (
              <Count key={c.label} title={c.label}><Art size={19} w={19}>{c.art}</Art>{c.value}</Count>
            ))}
          </StatusCell>
          <StatusCell $width={54}>
            <span>Units:&nbsp;</span><a href="#units">mm</a>
          </StatusCell>
        </StatusBar>
      </Client>
    </Frame>
  );
}
